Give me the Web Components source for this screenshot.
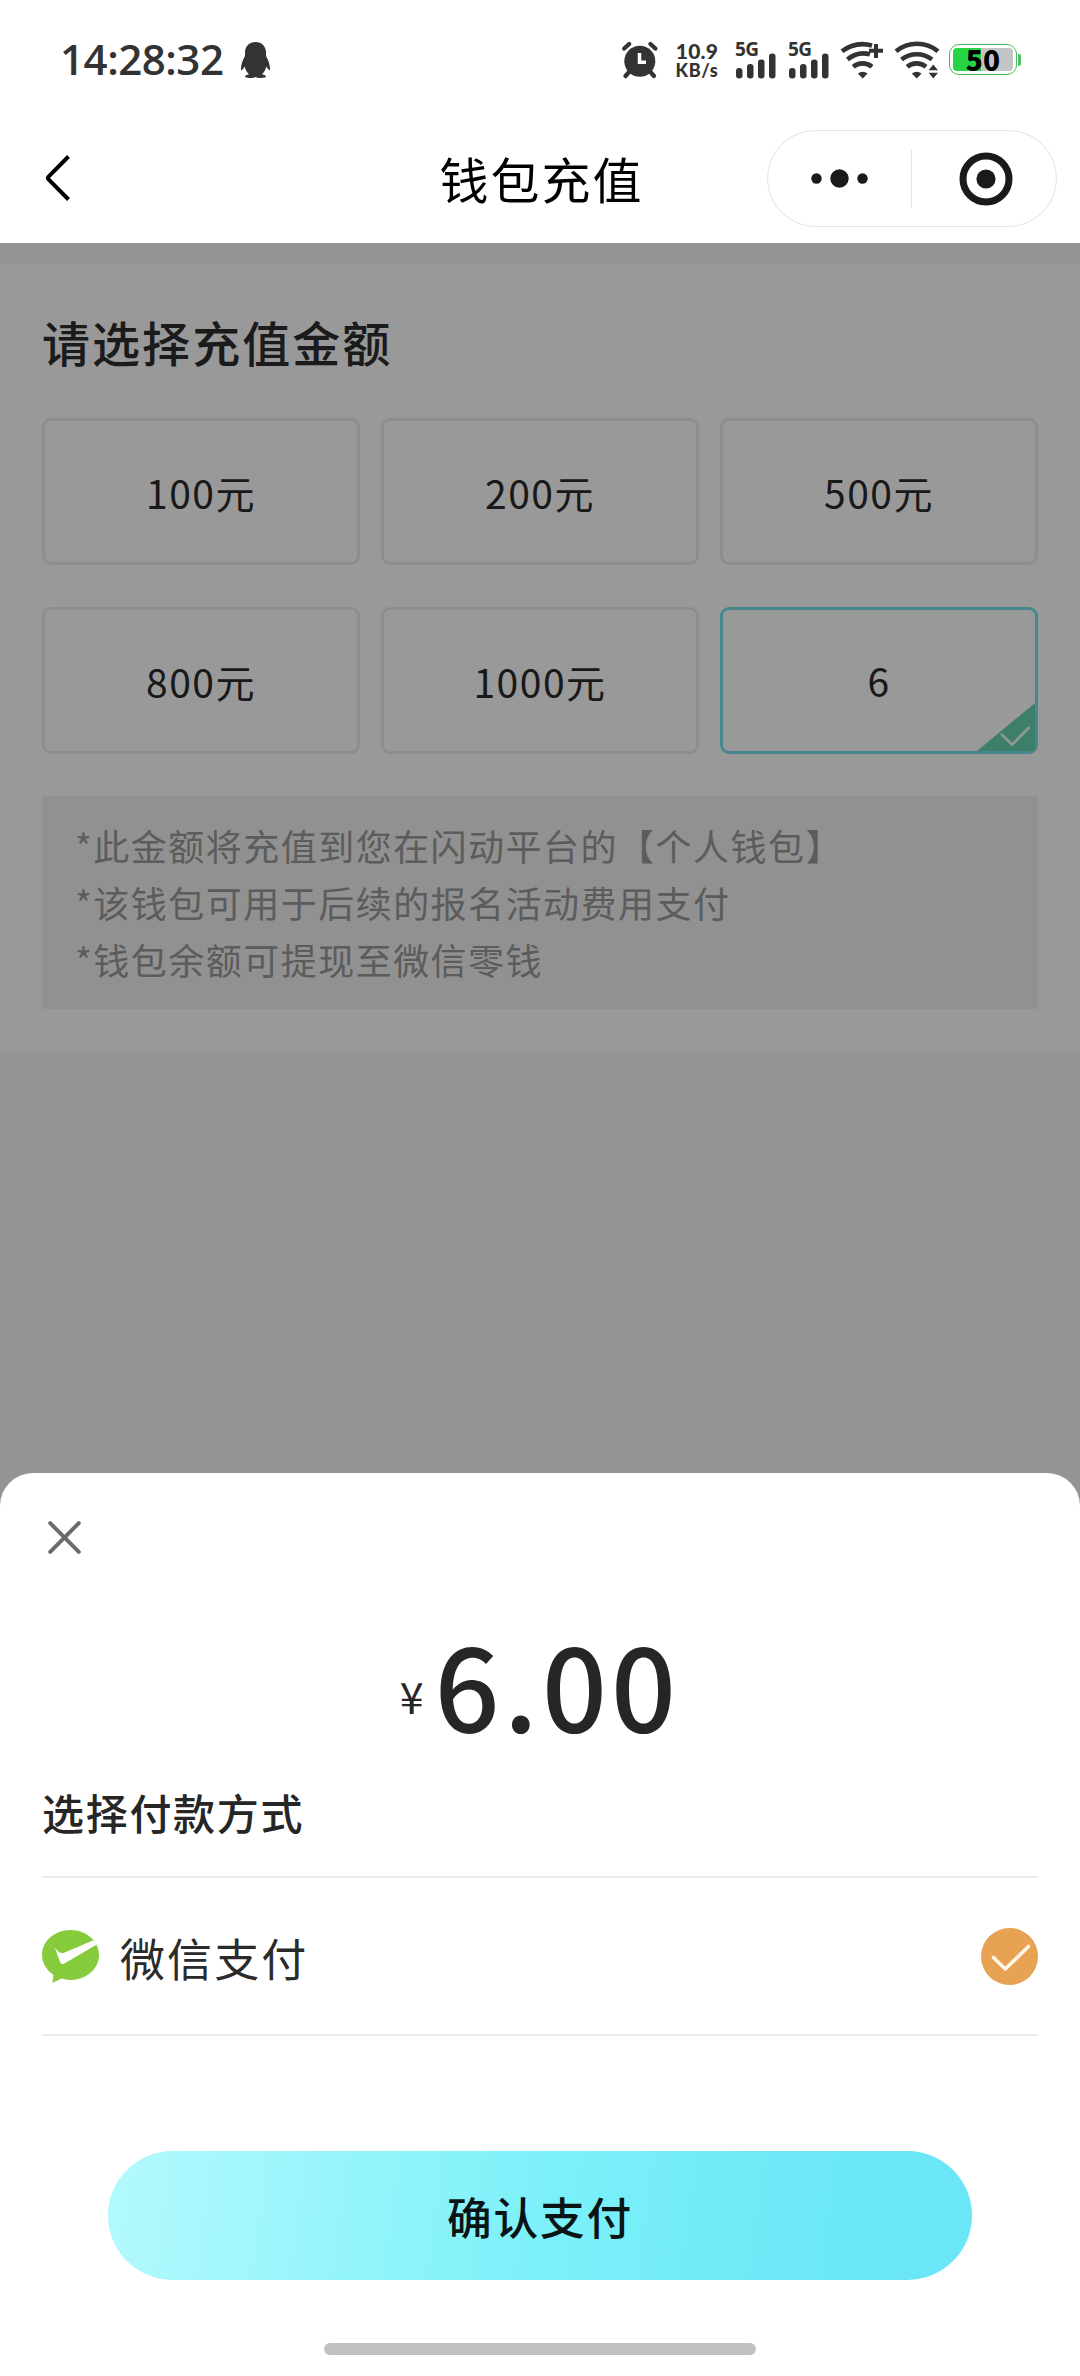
<!DOCTYPE html>
<html lang="zh-CN">
<head>
<meta charset="utf-8">
<title>钱包充值</title>
<style>
html,body{margin:0;padding:0}
body{width:1080px;height:2376px;overflow:hidden;background:#f7f7f7;font-family:"Noto Sans CJK SC","Noto Sans",sans-serif;color:#2b2b2b}
</style>
</head>
<body>
<wallet-app></wallet-app>
<script>
const define = (name, html) => customElements.define(name, class extends HTMLElement {
  constructor() {
    super();
    this.attachShadow({ mode: 'open' }).innerHTML = html;
  }
});

define('status-bar', `
<style>
:host{display:flex;align-items:flex-start;height:118px;box-sizing:border-box;padding:40px 59px 0 60px;background:#fff;color:#333;font-family:"Open Sans","Noto Sans",sans-serif;letter-spacing:0}
svg{display:block;flex:none}
.time{font-size:42px;font-weight:600;line-height:42px;letter-spacing:-.45px;width:181px;margin-top:-2px}
.speed{width:50px;margin:0 0 0 13px;text-align:center;font-weight:900;white-space:nowrap;font-family:Lato,"Open Sans",sans-serif}
.speed div{font-size:21px;line-height:21px;letter-spacing:.2px}
.speed div+div{font-size:18px;line-height:19px;letter-spacing:.7px}
.qq{margin-top:2px}
.grow{flex:1}
.sig{width:53px;flex:none}
.sig span{display:block;font-size:19px;font-weight:700;line-height:18px;letter-spacing:-.6px;margin-left:1px}
.sig svg{margin-top:-7px}
.bat{display:flex;align-items:center;margin:4px 0 0 9px}
.shell{box-sizing:border-box;width:68px;height:31px;border:1.5px solid #4dba5b;border-radius:10px;padding:3px;display:flex}
.fill{flex:1;border-radius:4px;background:linear-gradient(90deg,#27d446 46.5%,#c4c4c4 46.5%);display:flex;align-items:center;justify-content:center;color:#000;font:700 28px/22px "Noto Sans CJK SC",sans-serif}
.fill b{margin-top:-2px;letter-spacing:.3px}
.nub{width:3px;height:12px;background:#4fc163;border-radius:0 2px 2px 0;margin-left:1px}
</style>
<div class="time">14:28:32</div>
<svg class="qq" width="29" height="36" viewBox="0 0 29 36" fill="#333"><path d="M14.500 0C8.500 0 4.300 4 4 10v4C1.800 18 0 22.500 0 27c0 2 1 1.700 3.700-2.500C4.500 28 6 30.600 8 32.300c-2.500.5-4 1.200-4 2.500 0 1.500 8.500 1.500 10.500.2 2 1.300 10.500 1.300 10.500-.2 0-1.300-1.500-2-4-2.500 2-1.700 3.500-4.300 4.300-7.800C28 28.700 29 29 29 27c0-4.500-1.800-9-4-13v-4C24.700 4 20.500 0 14.500 0z"/></svg>
<div class="grow"></div>
<svg width="38" height="40" viewBox="0 0 38 40"><g stroke="#333" stroke-width="4.300" stroke-linecap="round"><path d="M3.200 8.500l5-4.500M34.400 8.500l-5-4.500"/><path d="M9 31l-4.500 5M28.500 31l4.500 5"/></g><circle cx="18.800" cy="21.300" r="15.500" fill="#333"/><path d="M18.500 13v9.300h6.500" fill="none" stroke="#fff" stroke-width="3.500"/></svg>
<div class="speed"><div>10.9</div><div>KB/s</div></div>
<div class="sig" style="margin-left:12px"><span>5G</span><svg width="44" height="28" viewBox="0 0 44 28" fill="#333"><rect x="2" y="17" width="6.500" height="10.500" rx="3"/><rect x="13" y="13" width="6.500" height="14.500" rx="3"/><rect x="24" y="8.500" width="6.500" height="19" rx="3"/><rect x="35" y="2.500" width="6.500" height="25" rx="3"/></svg></div>
<div class="sig"><span>5G</span><svg width="44" height="28" viewBox="0 0 44 28" fill="#333"><rect x="2" y="17" width="6.500" height="10.500" rx="3"/><rect x="13" y="13" width="6.500" height="14.500" rx="3"/><rect x="24" y="8.500" width="6.500" height="19" rx="3"/><rect x="35" y="2.500" width="6.500" height="25" rx="3"/></svg></div>
<svg width="46" height="40" viewBox="0 0 46 40"><g fill="none" stroke="#333" stroke-width="4.600"><path d="M2 11.300A34 34 0 0 1 32 5.500"/><path d="M7.500 19.500A24.500 24.500 0 0 1 30 14.300"/><path d="M13.200 26.800A14.500 14.500 0 0 1 32 26.800"/></g><path d="M17.800 33.600q5-3.600 9.800 0L22.700 38.600z" fill="#333"/><path d="M36 4v14M29 10.800h14" stroke="#333" stroke-width="4"/></svg>
<svg style="margin-left:8px" width="46" height="40" viewBox="0 0 46 40"><g fill="none" stroke="#333" stroke-width="4.600"><path d="M2 11.300A33 33 0 0 1 44 11.300"/><path d="M7.500 19.500A24.500 24.500 0 0 1 38 19.500"/><path d="M13.200 26.800A14.500 14.500 0 0 1 32 26.800"/></g><path d="M17.800 33.600q5-3.600 9.800 0L22.700 38.600z" fill="#333"/><path d="M39.300 24.500l4.700 5.700h-9.400zM39.300 38.500l4.700-5.700h-9.400z" fill="#333"/></svg>
<div class="bat"><div class="shell"><div class="fill"><b>50</b></div></div><div class="nub"></div></div>`);

define('nav-bar', `
<style>
:host{display:grid;grid-template-columns:1fr auto 1fr;align-items:center;height:125px;box-sizing:border-box;padding:0 23px 5px 44px;background:#fff;color:#000}
h1{margin:0;padding-right:18px;font-weight:400;font-size:49px;line-height:70px;letter-spacing:2px}
.capsule{justify-self:end;box-sizing:border-box;width:290px;height:97px;border:1px solid #e3e3e3;border-radius:49px}
svg{display:block}
</style>
<svg width="28" height="50" viewBox="0 0 28 50" fill="none" stroke="#000" stroke-width="4"><path d="M24.500 3.500L4.800 23.400q-1.600 1.600 0 3.200L24.500 46.500"/></svg>
<h1><slot></slot></h1>
<div class="capsule"><svg width="288" height="95" viewBox="0 0 288 95" fill="#1a1a1a"><circle cx="48.500" cy="47.500" r="5.200"/><circle cx="71.500" cy="47.500" r="9.200"/><circle cx="94.500" cy="47.500" r="5.200"/><path d="M143.500 19v58" stroke="#e3e3e3"/><circle cx="218" cy="48" r="23" fill="none" stroke="#1a1a1a" stroke-width="7"/><circle cx="218" cy="48" r="9.600"/></svg></div>`);

define('amount-card', `
<style>
:host{display:flex;position:relative;box-sizing:border-box;height:147px;border:3px solid #ebebeb;border-radius:9px;align-items:center;justify-content:center;font-size:39px;line-height:56px;letter-spacing:1.500px;background:#fff}
:host([selected]){border-color:#73e5ec;padding-bottom:1px}
svg{display:none;position:absolute;right:0;bottom:0}
:host([selected]) svg{display:block}
</style>
<slot></slot>
<svg width="58" height="48" viewBox="0 0 58 48"><path d="M58 0v48H0z" fill="#66d4b2"/><path d="M24 31l11.300 10.500L52.500 24" fill="none" stroke="#eefaf6" stroke-width="2.700"/></svg>`);

define('note-box', `
<style>
:host{display:block;box-sizing:border-box;height:213px;background:#f2f2f2;padding:21px 33px 20px;color:#999;font-size:36px;line-height:57px;letter-spacing:1.480px}
::slotted(p){margin:0}
</style><slot></slot>`);

define('recharge-panel', `
<style>
:host{display:block;margin-top:21px;box-sizing:border-box;height:787px;background:#fff;padding:42px 42px 0}
h2{margin:0;font-weight:500;font-size:48px;line-height:70px;letter-spacing:2.050px;color:#2d2d2d}
.grid{display:grid;grid-template-columns:repeat(3,1fr);gap:42px 21px;margin:42px 0}
</style>
<h2><slot name="title"></slot></h2>
<div class="grid"><slot></slot></div>
<slot name="notes"></slot>`);

define('price-tag', `
<style>
:host{display:flex;justify-content:center;height:164px;color:#262626}
.u{font-size:43px;line-height:191px}
.n{font-size:114px;line-height:165px;font-weight:500;letter-spacing:4.200px;margin-left:11px}
</style><span class="u">¥</span><span class="n"><slot></slot></span>`);

define('pay-method', `
<style>
:host{display:flex;align-items:center;box-sizing:border-box;height:160px;border:solid #ececec;border-width:2.500px 0;font-size:45px;line-height:64px;letter-spacing:2.100px}
.l{flex:1;margin-left:21px;padding-top:3px}
svg{display:block}
</style>
<svg width="57" height="57" viewBox="0 0 57 57"><path d="M28.500 2C12.800 2 0 13.200 0 27c0 8 4.500 15.200 11.500 19.800L10.300 55l9.400-4.500A33 33 0 0 0 28.500 52C44.200 52 57 40.800 57 27 57 13.200 44.200 2 28.500 2z" fill="#86cb3c"/><path d="M12.800 19.500q4.500 6.500 8.700 5.500L51.500 12.200l3.300 4.300L22 35.700q-3 1-4-1.800z" fill="#fff"/></svg>
<span class="l"><slot></slot></span>
<svg width="57" height="57" viewBox="0 0 57 57"><circle cx="28.500" cy="28.500" r="28.500" fill="#e8a253"/><path d="M12.500 29.500L24.300 41 47.500 18.500" fill="none" stroke="#fff6e8" stroke-width="3.600" stroke-linecap="round" stroke-linejoin="round"/></svg>`);

define('pay-button', `
<style>
:host{display:flex;align-items:center;justify-content:center;width:864px;height:129px;border-radius:65px;margin:115px auto 0;background:linear-gradient(98deg,#b0f9fd 3%,#7bf0f9 52%,#6ae6f6 88%);color:#0b1414;font-size:44.700px;line-height:64px;font-weight:500;letter-spacing:1.800px}
</style><slot></slot>`);

define('pay-sheet', `
<style>
:host{display:block;position:absolute;left:0;right:0;bottom:0;height:903px;box-sizing:border-box;background:#fff;border-radius:33px 33px 0 0;padding:0 42px}
.close{display:block;padding:47px 0 45px 5px}
h3{margin:15px 0 31px;font-weight:500;font-size:42px;line-height:66px;letter-spacing:1.700px;color:#262626}
.home{width:432px;height:12px;border-radius:6px;background:#c1c1c1;margin:63px auto 0}
</style>
<svg class="close" width="35" height="35" viewBox="0 0 35 35" stroke="#6b6b6b" stroke-width="4" stroke-linecap="round"><path d="M3.200 3.200l28.600 28.600M31.800 3.200L3.200 31.800"/></svg>
<price-tag><slot name="price"></slot></price-tag>
<h3><slot name="title"></slot></h3>
<slot></slot>
<div class="home"></div>`);

define('wallet-app', `
<style>
:host{display:block;position:relative;width:1080px;height:2376px;overflow:hidden;background:#f7f7f7}
.content{display:flow-root}
.mask{position:absolute;inset:243px 0 0;background:rgba(0,0,0,.4)}
p{margin:0}
</style>
<status-bar></status-bar>
<nav-bar>钱包充值</nav-bar>
<div class="content">
<recharge-panel><span slot="title">请选择充值金额</span>
<amount-card>100元</amount-card><amount-card>200元</amount-card><amount-card>500元</amount-card>
<amount-card>800元</amount-card><amount-card>1000元</amount-card><amount-card selected>6</amount-card>
<note-box slot="notes"><p>*此金额将充值到您在闪动平台的【个人钱包】</p><p>*该钱包可用于后续的报名活动费用支付</p><p>*钱包余额可提现至微信零钱</p></note-box>
</recharge-panel>
</div>
<div class="mask"></div>
<pay-sheet><span slot="price">6.00</span><span slot="title">选择付款方式</span>
<pay-method>微信支付</pay-method>
<pay-button>确认支付</pay-button>
</pay-sheet>`);
</script>
</body>
</html>
